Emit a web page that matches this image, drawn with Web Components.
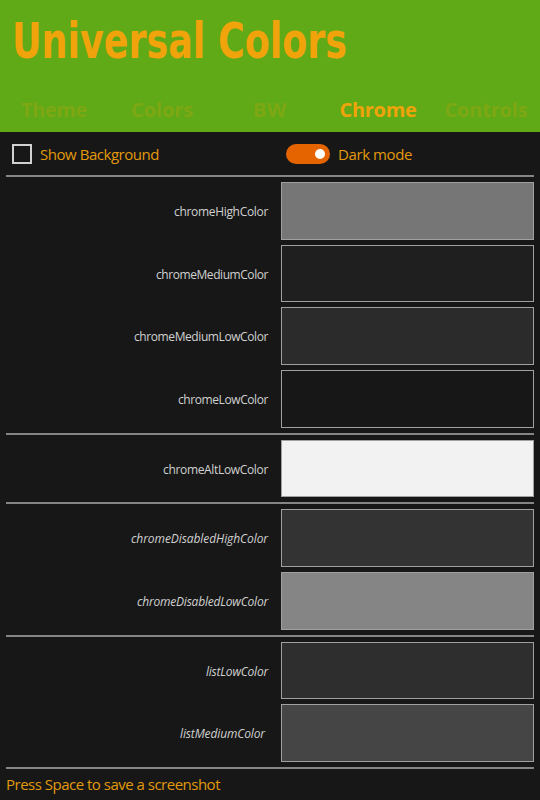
<!DOCTYPE html>
<html lang="en"><head><meta charset="utf-8"><title>Universal Colors</title>
<style>
html,body{margin:0;background:#171717}
body{width:540px;height:800px;overflow:hidden;font-family:"Open Sans","Noto Sans",sans-serif}
</style></head><body>
<colors-app></colors-app>
<script>
const define = (name, html, setup) => customElements.define(name, class extends HTMLElement {
  connectedCallback() {
    if (this.shadowRoot) return;
    this.attachShadow({ mode: "open" }).innerHTML = html;
    if (setup) setup(this, this.shadowRoot);
  }
});

// Text run whose tracking is adjusted to fill the given width.
define("fit-text", `<style>:host{display:inline-block;white-space:nowrap;line-height:20px}span{display:inline-block}</style><span></span>`, (el, root) => {
  const s = root.querySelector("span"), t = el.getAttribute("text"), w = +el.getAttribute("w");
  s.textContent = t;
  const natural = s.getBoundingClientRect().width;
  const gap = (w - natural) / t.length;
  s.style.letterSpacing = gap + "px";
  el.style.width = w + "px";
});

// Heading condensed horizontally to its column.
define("app-title", `<style>:host{display:block;height:88px;box-sizing:border-box;padding:13px 0 0 12px}
h1{margin:0;display:inline-block;white-space:nowrap;transform-origin:0 0;font:bold 49px/58px "DejaVu Sans Condensed","DejaVu Sans",sans-serif;color:#f0a30a}</style>
<h1>Universal Colors</h1>`, (el, root) => {
  const h = root.querySelector("h1");
  h.style.transform = "scaleX(" + 335 / h.getBoundingClientRect().width + ")";
});

define("nav-tab", `<style>:host{display:flex;justify-content:center;align-items:center;height:44px;font-size:20px;font-weight:700;color:#7da814}
:host([selected]){color:#f0a30a}</style><slot></slot>`);

define("check-box", `<style>:host{display:flex;align-items:center;gap:8px;color:#e29a0c;font-size:15px}
i{box-sizing:border-box;width:20px;height:20px;border:2px solid #d1d1d1}</style><i></i><slot></slot>`);

define("toggle-switch", `<style>:host{display:flex;align-items:center;gap:8px;color:#e29a0c;font-size:15px}
i{box-sizing:border-box;width:44px;height:20px;border-radius:10px;background:#e56400;display:flex;align-items:center;justify-content:flex-end;padding-right:5px}
b{width:10px;height:10px;border-radius:50%;background:#fff}</style><i><b></b></i><slot></slot>`);

define("rule-line", `<style>:host{display:block;height:2px;background:#858585}</style>`);

define("color-row", `<style>:host{display:grid;grid-template-columns:1fr 253px;column-gap:13px;font-size:12px;color:#d1d1d1}
:host([italic]){font-style:italic}
div{display:flex;align-items:center;justify-content:flex-end;padding-top:2px}
i{box-sizing:border-box;border:1px solid #a0a0a0}</style><div><slot></slot></div><i></i>`, (el, root) => {
  el.style.height = el.getAttribute("h") + "px";
  root.querySelector("i").style.background = el.getAttribute("color");
  if (el.hasAttribute("inset")) root.querySelector("div").style.paddingRight = el.getAttribute("inset") + "px";
});

define("colors-app", `<style>
:host{display:block;width:540px;height:800px;background:#171717}
header{background:#60a917;height:132px}
nav{display:grid;grid-template-columns:repeat(5,108px)}
.options{display:grid;grid-template-columns:274px 1fr;height:43px;padding-left:12px;align-items:center}
main{display:flex;flex-direction:column;gap:5px;padding:0 6px}
footer{padding:5px 6px 0;color:#e29a0c;font-size:15px;line-height:20px;display:flex}
</style>
<header><app-title></app-title>
<nav>
<nav-tab><fit-text text="Theme" w="66"></fit-text></nav-tab>
<nav-tab><fit-text text="Colors" w="62"></fit-text></nav-tab>
<nav-tab><fit-text text="BW" w="34"></fit-text></nav-tab>
<nav-tab selected><fit-text text="Chrome" w="77"></fit-text></nav-tab>
<nav-tab><fit-text text="Controls" w="83"></fit-text></nav-tab>
</nav></header>
<div class="options"><check-box><fit-text text="Show Background" w="119"></fit-text></check-box>
<toggle-switch><fit-text text="Dark mode" w="74"></fit-text></toggle-switch></div>
<main>
<rule-line></rule-line>
<color-row h="58" color="#767676"><fit-text text="chromeHighColor" w="94"></fit-text></color-row>
<color-row h="57" color="#1f1f1f"><fit-text text="chromeMediumColor" w="112"></fit-text></color-row>
<color-row h="58" color="#2b2b2b"><fit-text text="chromeMediumLowColor" w="134"></fit-text></color-row>
<color-row h="58" color="#171717"><fit-text text="chromeLowColor" w="90"></fit-text></color-row>
<rule-line></rule-line>
<color-row h="57" color="#f2f2f2"><fit-text text="chromeAltLowColor" w="105"></fit-text></color-row>
<rule-line></rule-line>
<color-row italic h="58" color="#333333"><fit-text text="chromeDisabledHighColor" w="137"></fit-text></color-row>
<color-row italic h="58" color="#858585"><fit-text text="chromeDisabledLowColor" w="131"></fit-text></color-row>
<rule-line></rule-line>
<color-row italic h="57" color="#2e2e2e"><fit-text text="listLowColor" w="62"></fit-text></color-row>
<color-row italic inset="3" h="58" color="#454545"><fit-text text="listMediumColor" w="85"></fit-text></color-row>
<rule-line></rule-line>
</main>
<footer><fit-text text="Press Space to save a screenshot" w="214"></fit-text></footer>`);
</script>
</body></html>
